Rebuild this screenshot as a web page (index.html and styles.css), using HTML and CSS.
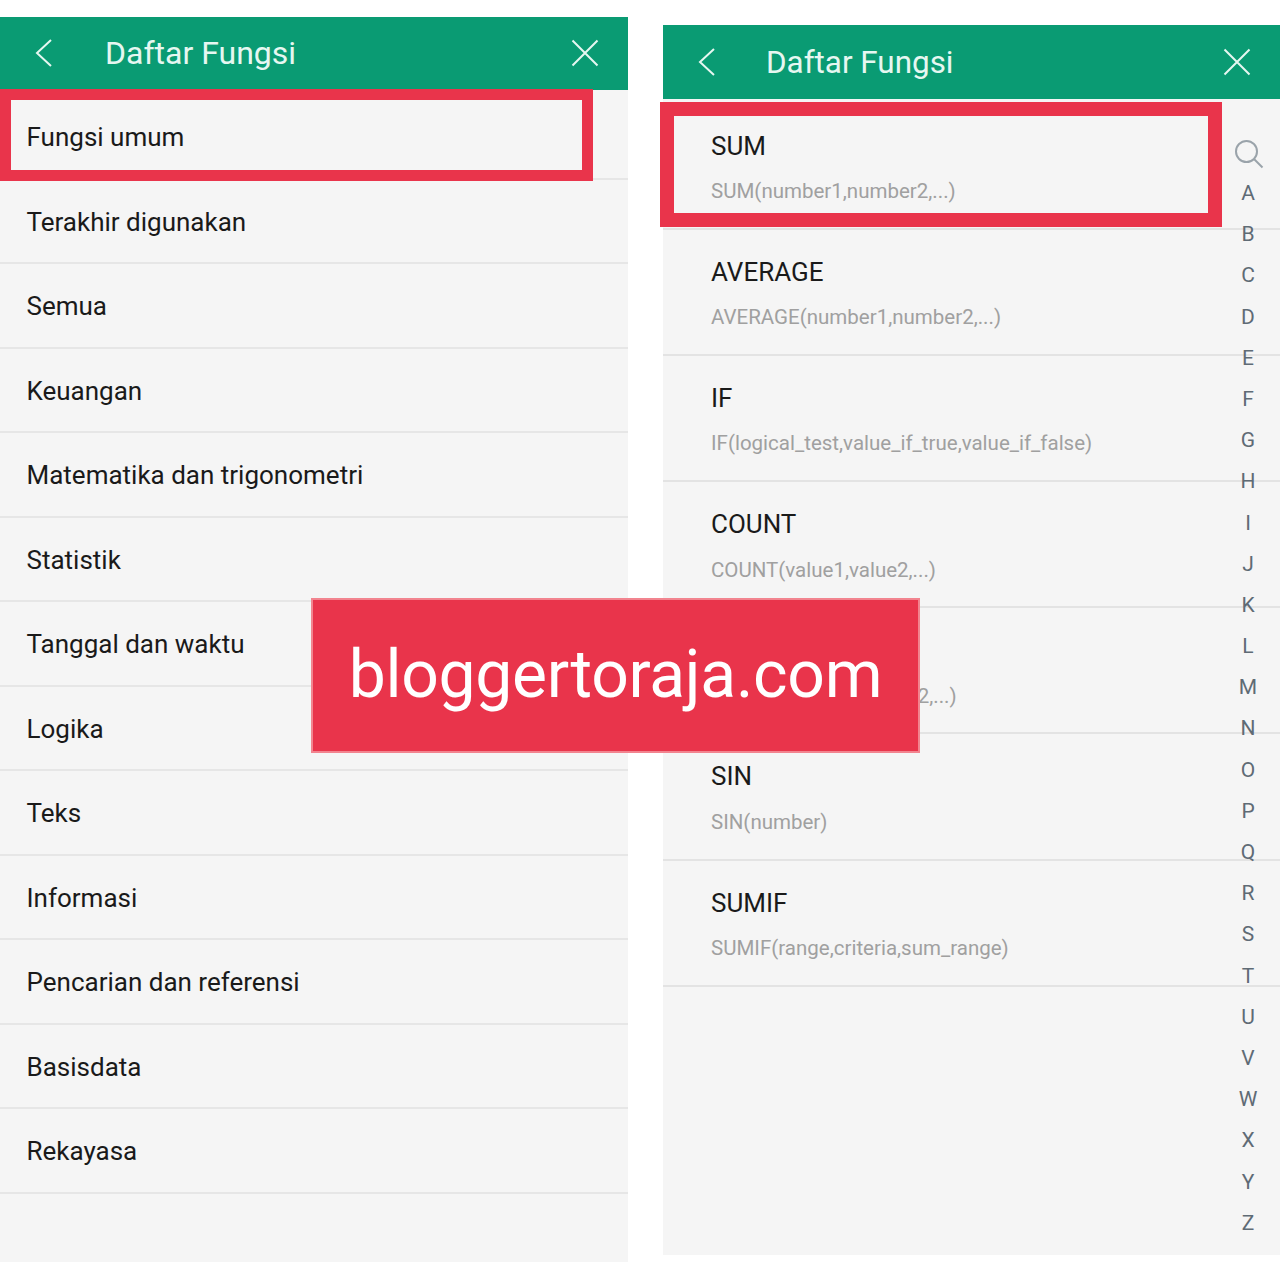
FILE: index.html
```html
<!DOCTYPE html>
<html lang="en">
<head>
  <meta charset="UTF-8">
  <title>Daftar Fungsi</title>
  <link rel="stylesheet" href="styles.css">
</head>
<body>
  <div class="screens">
    <section class="panel panel-left">
      <header class="appbar">
        <svg class="icon-back" viewBox="0 0 18 28"><path d="M16 1 2 14 16 27"/></svg>
        <h1>Daftar Fungsi</h1>
        <svg class="icon-close" viewBox="0 0 28 28"><path d="M1.5 1.5 26.5 26.5M26.5 1.5 1.5 26.5"/></svg>
      </header>
      <ul class="list">
        <li>Fungsi umum</li>
        <li>Terakhir digunakan</li>
        <li>Semua</li>
        <li>Keuangan</li>
        <li>Matematika dan trigonometri</li>
        <li>Statistik</li>
        <li>Tanggal dan waktu</li>
        <li>Logika</li>
        <li>Teks</li>
        <li>Informasi</li>
        <li>Pencarian dan referensi</li>
        <li>Basisdata</li>
        <li>Rekayasa</li>
      </ul>
      <div class="mark mark-left"></div>
    </section>

    <section class="panel panel-right">
      <header class="appbar">
        <svg class="icon-back" viewBox="0 0 18 28"><path d="M16 1 2 14 16 27"/></svg>
        <h1>Daftar Fungsi</h1>
        <svg class="icon-close" viewBox="0 0 28 28"><path d="M1.5 1.5 26.5 26.5M26.5 1.5 1.5 26.5"/></svg>
      </header>
      <ul class="funcs">
        <li><b>SUM</b><span>SUM(number1,number2,...)</span></li>
        <li><b>AVERAGE</b><span>AVERAGE(number1,number2,...)</span></li>
        <li><b>IF</b><span>IF(logical_test,value_if_true,value_if_false)</span></li>
        <li><b>COUNT</b><span>COUNT(value1,value2,...)</span></li>
        <li><b>MAX</b><span>MAX(number1,number2,...)</span></li>
        <li><b>SIN</b><span>SIN(number)</span></li>
        <li><b>SUMIF</b><span>SUMIF(range,criteria,sum_range)</span></li>
      </ul>
      <div class="index">
        <svg class="icon-search" viewBox="0 0 30 30"><circle cx="12.5" cy="12.5" r="10.5"/><path d="M20 20 28.5 28.5"/></svg>
        <span>A</span><span>B</span><span>C</span><span>D</span><span>E</span><span>F</span><span>G</span>
        <span>H</span><span>I</span><span>J</span><span>K</span><span>L</span><span>M</span><span>N</span>
        <span>O</span><span>P</span><span>Q</span><span>R</span><span>S</span><span>T</span><span>U</span>
        <span>V</span><span>W</span><span>X</span><span>Y</span><span>Z</span>
      </div>
      <div class="mark mark-right"></div>
    </section>
  </div>

  <div class="banner">bloggertoraja.com</div>
</body>
</html>
```

FILE: styles.css
```css
* {
  box-sizing: border-box;
}

body {
  margin: 0;
  background: #fff;
  font-family: Roboto, "Liberation Sans", sans-serif;
  position: relative;
  height: 1280px;
  overflow: hidden;
}

.screens {
  display: flex;
  align-items: flex-start;
  gap: 35px;
}

.panel {
  position: relative;
  background: #f5f5f5;
}

.panel-left {
  width: 628px;
  height: 1245px;
  margin-top: 17px;
}

.panel-right {
  width: 617px;
  height: 1230px;
  margin-top: 25px;
}

.appbar {
  display: flex;
  align-items: center;
  height: 73px;
  padding: 0 29px 1px 35px;
  background: #0a9b73;
  color: #e6f7f1;
}

.panel-right .appbar {
  height: 74px;
  padding-bottom: 0;
}

.appbar h1 {
  flex: 1;
  margin: 0 0 0 52px;
  font-size: 32px;
  font-weight: 400;
}

.panel-right .appbar h1 {
  margin-left: 50px;
  padding-top: 1px;
  font-size: 31.4px;
}

.icon-back {
  width: 18px;
  height: 28px;
  fill: none;
  stroke: #e6f7f1;
  stroke-width: 2;
}

.icon-close {
  width: 28px;
  height: 28px;
  fill: none;
  stroke: #e6f7f1;
  stroke-width: 2;
}

.list,
.funcs {
  margin: 0;
  list-style: none;
}

.list {
  padding: 5px 0 0;
}

.list li {
  display: flex;
  align-items: center;
  height: 84.5px;
  padding: 2px 0 0 26.5px;
  border-bottom: 2px solid #e6e6e6;
  font-size: 26px;
  color: #1a1a1a;
}

.funcs {
  padding: 4.5px 0 0;
}

.funcs li {
  display: flex;
  flex-direction: column;
  height: 126.2px;
  padding: 27px 0 0 48px;
  border-bottom: 2px solid #e3e3e3;
}

.funcs b {
  font-weight: 400;
  font-size: 26px;
  line-height: 30px;
  color: #1a1a1a;
}

.funcs span {
  margin-top: 17.5px;
  font-size: 20.5px;
  line-height: 26px;
  color: #a0a0a0;
}

.index {
  position: absolute;
  top: 111px;
  right: 0;
  width: 64px;
  display: flex;
  flex-direction: column;
  align-items: center;
  font-size: 21px;
  color: #5f6b75;
}

.index span {
  height: 41.2px;
  line-height: 41.2px;
}

.icon-search {
  width: 30px;
  height: 30px;
  margin: 3px 0 4px 2px;
  fill: none;
  stroke: #9aa3aa;
  stroke-width: 2;
}

.mark {
  position: absolute;
  border-style: solid;
  border-color: #e9344b;
}

.mark-left {
  top: 72px;
  left: 0;
  width: 593px;
  height: 92px;
  border-width: 11px;
}

.mark-right {
  top: 77px;
  left: -3px;
  width: 562px;
  height: 125px;
  border-width: 14px;
}

.banner {
  position: absolute;
  top: 598px;
  left: 311px;
  width: 609px;
  height: 155px;
  display: flex;
  align-items: center;
  justify-content: center;
  background: #e9344b;
  border: 2px solid #f2848f;
  color: #fff;
  font-size: 66px;
  letter-spacing: -0.3px;
  padding-bottom: 2px;
}
```
